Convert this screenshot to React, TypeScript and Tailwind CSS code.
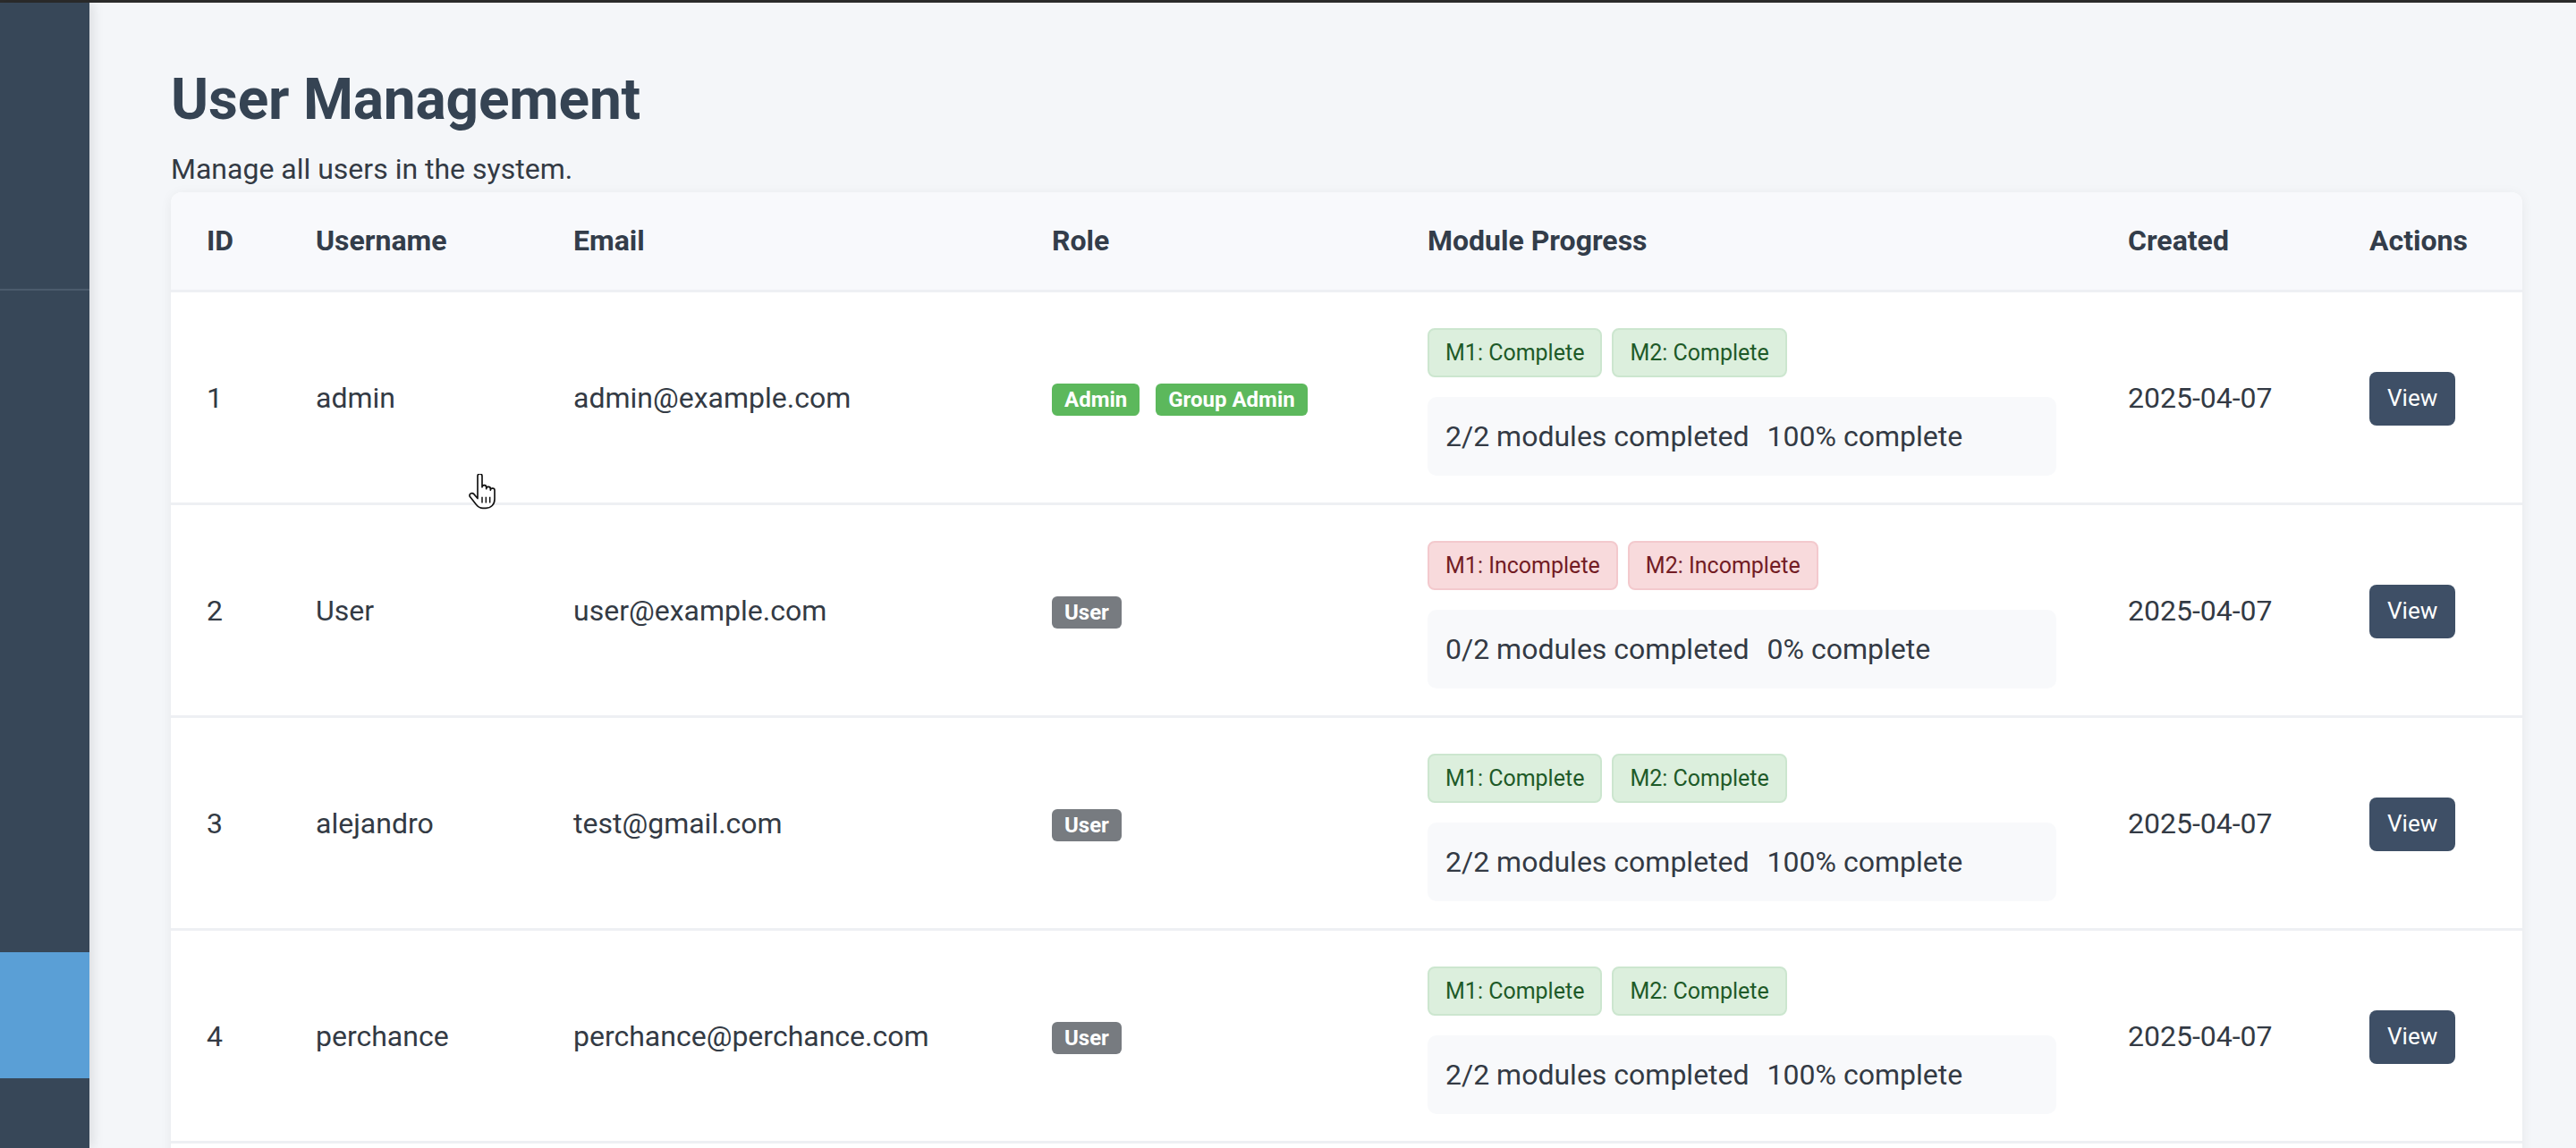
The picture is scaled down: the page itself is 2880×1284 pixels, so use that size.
import React from "react";

type Mod = { label: string; done: boolean };
type Row = {
  id: number;
  username: string;
  email: string;
  roles: { label: string; tone: "green" | "gray" }[];
  modules: Mod[];
  summary: string;
  pct: string;
  created: string;
};

const USERS: Row[] = [
  {
    id: 1,
    username: "admin",
    email: "admin@example.com",
    roles: [
      { label: "Admin", tone: "green" },
      { label: "Group Admin", tone: "green" },
    ],
    modules: [
      { label: "M1: Complete", done: true },
      { label: "M2: Complete", done: true },
    ],
    summary: "2/2 modules completed",
    pct: "100% complete",
    created: "2025-04-07",
  },
  {
    id: 2,
    username: "User",
    email: "user@example.com",
    roles: [{ label: "User", tone: "gray" }],
    modules: [
      { label: "M1: Incomplete", done: false },
      { label: "M2: Incomplete", done: false },
    ],
    summary: "0/2 modules completed",
    pct: "0% complete",
    created: "2025-04-07",
  },
  {
    id: 3,
    username: "alejandro",
    email: "test@gmail.com",
    roles: [{ label: "User", tone: "gray" }],
    modules: [
      { label: "M1: Complete", done: true },
      { label: "M2: Complete", done: true },
    ],
    summary: "2/2 modules completed",
    pct: "100% complete",
    created: "2025-04-07",
  },
  {
    id: 4,
    username: "perchance",
    email: "perchance@perchance.com",
    roles: [{ label: "User", tone: "gray" }],
    modules: [
      { label: "M1: Complete", done: true },
      { label: "M2: Complete", done: true },
    ],
    summary: "2/2 modules completed",
    pct: "100% complete",
    created: "2025-04-07",
  },
];

const COLS = "grid grid-cols-[122px_288px_535px_420px_783px_270px_211px]";

function HandCursor() {
  return (
    <svg
      className="absolute left-[522px] top-[530px] w-[34px] h-[40px] pointer-events-none"
      viewBox="0 0 20 24"
    >
      <path
        d="M7 1.5C7 0.7 7.6 0 8.5 0C9.4 0 10 0.7 10 1.5V9C10 8.2 10.6 7.6 11.4 7.6C12.2 7.6 12.8 8.2 12.8 9V10C12.8 9.2 13.4 8.6 14.2 8.6C15 8.6 15.6 9.2 15.6 10V11C15.6 10.2 16.2 9.7 17 9.7C17.8 9.7 18.4 10.3 18.4 11V17C18.4 20.5 16 23 12.5 23H10.5C8.5 23 7.2 22 6 20.5L2 15.5C1.4 14.8 1.5 13.8 2.2 13.3C2.9 12.8 3.9 12.9 4.5 13.6L7 16.5Z"
        fill="#fff"
        stroke="#111"
        strokeWidth="1"
        strokeLinejoin="round"
      />
      <path d="M10 15.5V19.5M12.6 15.5V19.5M15.2 15.5V19.5" stroke="#111" strokeWidth="0.9" />
    </svg>
  );
}

export default function App() {
  return (
    <div className="relative h-[1284px] w-full overflow-hidden flex flex-col bg-[#f4f6f9] font-['Roboto',sans-serif]">
      <div className="h-[3px] bg-[#2b2b2b] shrink-0" />
      <div className="flex flex-1 min-h-0">
        {/* Sidebar */}
        <aside className="relative z-10 w-[100px] shrink-0 bg-[#374758] shadow-[4px_0_12px_rgba(0,0,0,0.10)] flex flex-col">
          <div className="h-[320px] shrink-0" />
          <div className="h-[2px] bg-[#4b5b6c]" />
          <div className="h-[740px] shrink-0" />
          <div className="h-[141px] bg-[#5a9fd6]" />
        </aside>

        {/* Main */}
        <main className="flex-1 min-w-0 pl-[91px] pr-[60px] pt-[71px]">
          <h1 className="text-[64px] leading-[76px] font-bold text-[#354353] tracking-[-0.2px]">
            User Management
          </h1>
          <p className="mt-[15px] text-[32px] leading-[48px] text-[#333a44]">
            Manage all users in the system.
          </p>

          <div className="mt-[2px] w-[2629px] bg-white rounded-t-[12px] shadow-[0_2px_14px_rgba(0,0,0,0.06)] overflow-hidden">
            {/* Header */}
            <div className={`${COLS} items-center h-[112px] bg-[#f8f9fc] border-b-[3px] border-[#eef0f4] text-[32px] font-bold text-[#333d4a]`}>
              {["ID", "Username", "Email", "Role", "Module Progress", "Created", "Actions"].map((h) => (
                <div key={h} className="px-[40px] -mt-[2px]">
                  {h}
                </div>
              ))}
            </div>

            {USERS.map((u) => (
              <div
                key={u.id}
                className={`${COLS} items-center h-[238px] border-b-[3px] border-[#eef0f3] text-[32px] text-[#333a44]`}
              >
                <div className="px-[40px]">{u.id}</div>
                <div className="px-[40px]">{u.username}</div>
                <div className="px-[40px]">{u.email}</div>
                <div className="px-[40px] pt-[5px] flex items-center gap-[18px]">
                  {u.roles.map((r) => (
                    <span
                      key={r.label}
                      className={`h-[36px] px-[14px] rounded-[6px] text-[24px] font-bold text-white flex items-center ${
                        r.tone === "green" ? "bg-[#5cb85c]" : "bg-[#777b80]"
                      }`}
                    >
                      {r.label}
                    </span>
                  ))}
                </div>
                <div className="px-[40px] pt-[10px]">
                  <div className="flex gap-[11px]">
                    {u.modules.map((m) => (
                      <span
                        key={m.label}
                        className={`h-[55px] px-[18px] rounded-[8px] border-2 text-[25px] flex items-center ${
                          m.done
                            ? "bg-[#dcefdd] border-[#cce6cf] text-[#1e5a28]"
                            : "bg-[#f8dadc] border-[#f3c9cd] text-[#721c24]"
                        }`}
                      >
                        {m.label}
                      </span>
                    ))}
                  </div>
                  <div className="mt-[22px] h-[88px] rounded-[10px] bg-[#f8f9fb] px-[20px] flex items-center gap-[20px]">
                    <span>{u.summary}</span>
                    <span>{u.pct}</span>
                  </div>
                </div>
                <div className="px-[40px]">{u.created}</div>
                <div className="px-[40px] pt-[2px]">
                  <button className="h-[60px] px-[20px] rounded-[8px] bg-[#3e4f66] text-white text-[26px] flex items-center">
                    View
                  </button>
                </div>
              </div>
            ))}
            <div className="h-[240px]" />
          </div>
        </main>
      </div>
      <HandCursor />
    </div>
  );
}
